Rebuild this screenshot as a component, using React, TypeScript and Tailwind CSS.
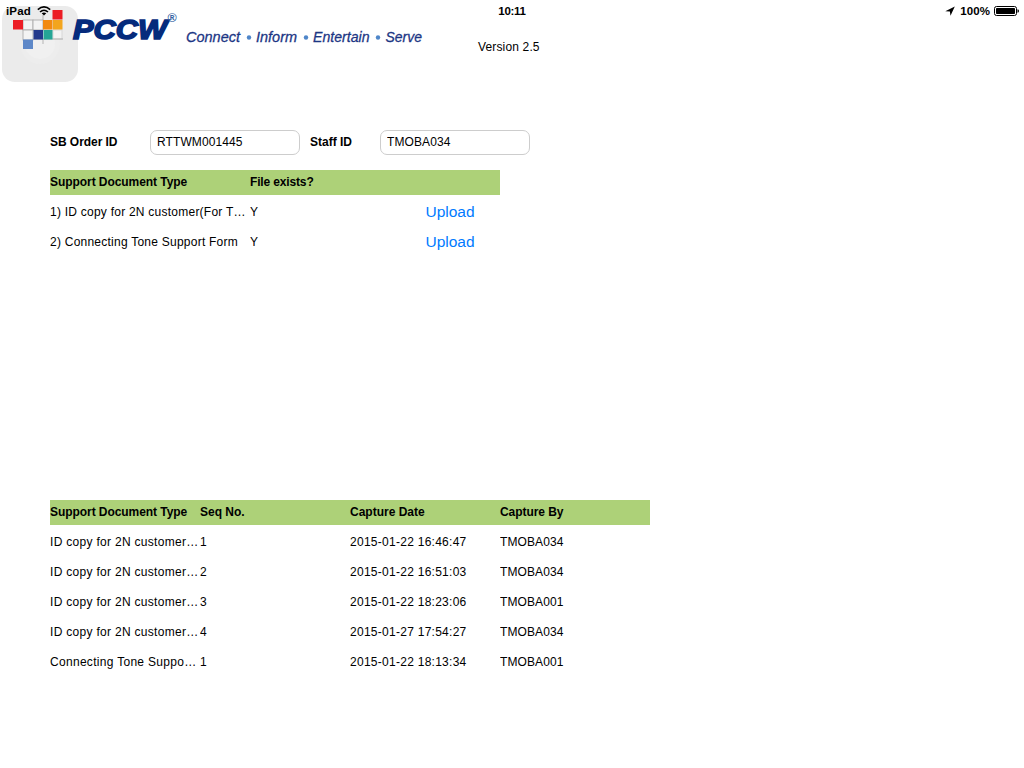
import React from "react";

const headCls = "text-[12px] leading-[25px] font-bold whitespace-pre";
const cellCls = "text-[12px] leading-[25px] overflow-hidden whitespace-pre";

const uploads = [
  { name: "1) ID copy for 2N customer(For T…", exists: "Y" },
  { name: "2) Connecting Tone Support Form", exists: "Y" },
];

const captures = [
  ["ID copy for 2N customer…", "1", "2015-01-22 16:46:47", "TMOBA034"],
  ["ID copy for 2N customer…", "2", "2015-01-22 16:51:03", "TMOBA034"],
  ["ID copy for 2N customer…", "3", "2015-01-22 18:23:06", "TMOBA001"],
  ["ID copy for 2N customer…", "4", "2015-01-27 17:54:27", "TMOBA034"],
  ["Connecting Tone Suppo…", "1", "2015-01-22 18:13:34", "TMOBA001"],
];

const font = "Liberation Sans, Arial, sans-serif";

function StatusBar() {
  return (
    <header className="absolute inset-x-0 top-0 grid h-[22px] grid-cols-3 items-center pl-[6px] pr-[5px] text-[11.5px] leading-[22px] font-bold">
      <div className="flex items-center gap-[6px]">
        <span className="tracking-[0.15px]">iPad</span>
        <svg width="14" height="10" viewBox="0 0 14 10" fill="none" stroke="#000" strokeWidth="1.6">
          <path d="M.8 3.600Q7-1.800 13.200 3.600" />
          <path d="M3 6Q7 2.500 11 6" />
          <path d="M7 9.600L4.700 7.300Q7 5.500 9.300 7.300Z" fill="#000" stroke="none" />
        </svg>
      </div>
      <div className="pr-[1px] text-center tracking-[-0.3px]">10:11</div>
      <div className="flex items-center justify-end">
        <svg className="mr-[5px]" width="10" height="10" viewBox="0 0 10 10">
          <path d="M9.800 .5L5.500 9.800L4.900 5.500L.3 5.300Z" />
        </svg>
        <span className="mr-[4px] tracking-[0.1px]">100%</span>
        <svg width="25" height="10" viewBox="0 0 25 10">
          <rect x=".5" y=".5" width="22" height="9" rx="2" fill="none" stroke="#000" />
          <rect x="2" y="2" width="19" height="6" rx=".8" />
          <path d="M23.500 3.200Q25 3.500 25 5T23.500 6.800Z" />
        </svg>
      </div>
    </header>
  );
}

function Logo() {
  return (
    <svg className="block" width="440" height="90" viewBox="0 0 440 90" fontFamily={font}>
      <rect x="2" y="6" width="76" height="76" rx="13" fill="#ebebeb" />
      <circle cx="40" cy="44" r="20" fill="#ededed" />
      <circle cx="40" cy="44" r="15" fill="#f0f0f0" />
      <g stroke="#adadad" strokeWidth=".9" fill="#f3f3f3">
        <rect x="23" y="20" width="10" height="10" />
        <rect x="33" y="20" width="10" height="10" />
        <rect x="23" y="30" width="10" height="10" />
        <rect x="53" y="30" width="9" height="9" stroke="#d6d6d6" />
        <path d="M43 39v5M43 15v5M33 39h30" />
      </g>
      <rect x="52.500" y="10" width="10" height="9.500" fill="#ec1c24" />
      <rect x="13" y="20" width="10" height="9.500" fill="#ec1c24" />
      <rect x="43" y="20" width="9.500" height="9.500" fill="#f28a10" />
      <rect x="53" y="20" width="9.500" height="9.500" fill="#f3a51d" />
      <rect x="33.500" y="30" width="9.500" height="9.500" fill="#243a8c" />
      <rect x="43.500" y="30" width="9" height="9.500" fill="#25a596" />
      <rect x="23" y="39.500" width="10" height="9.500" fill="#5e88c8" />
      <text x="73" y="39" fontSize="27" fontWeight="bold" fontStyle="italic" fill="#052b7c" stroke="#052b7c" strokeWidth="1.600" textLength="94" lengthAdjust="spacingAndGlyphs">PCCW</text>
      <text x="167.500" y="21.500" fontSize="12.500" fontWeight="bold" fill="#3564a4">®</text>
      <g fontSize="15.500" fontStyle="italic" fill="#1c3684" stroke="#1c3684" strokeWidth=".3">
        <text x="186" y="42" textLength="54" lengthAdjust="spacingAndGlyphs">Connect</text>
        <text x="256" y="42" textLength="41" lengthAdjust="spacingAndGlyphs">Inform</text>
        <text x="313" y="42" textLength="56.500" lengthAdjust="spacingAndGlyphs">Entertain</text>
        <text x="385.500" y="42" textLength="36.500" lengthAdjust="spacingAndGlyphs">Serve</text>
      </g>
      <g fill="#4f86c9">
        <circle cx="249" cy="37.500" r="2.200" />
        <circle cx="306" cy="37.500" r="2.200" />
        <circle cx="378" cy="37.500" r="2.200" />
      </g>
    </svg>
  );
}

function Field({ value }: { value: string }) {
  return (
    <input
      readOnly
      defaultValue={value}
      className="h-[25px] w-[150px] rounded-[7px] border border-[#cdcdcd] bg-white px-[6px] pb-[1px] text-[12px] tracking-[0.1px] outline-none"
    />
  );
}

export default function App() {
  return (
    <div className="relative flex h-[768px] w-[1024px] flex-col overflow-hidden bg-white font-['Liberation_Sans',Arial,sans-serif] text-black">
      <div className="flex h-[130px] items-start">
        <Logo />
        <div className="ml-[38px] mt-[38px] text-[12px] leading-[18px] tracking-[0.15px]">Version 2.5</div>
      </div>
      <StatusBar />
      <div className="ml-[50px] flex h-[25px] items-center">
        <label className="w-[100px] pb-[2px] text-[12px] font-bold tracking-[-0.05px]">SB Order ID</label>
        <Field value="RTTWM001445" />
        <label className="ml-[10px] w-[70px] pb-[2px] text-[12px] font-bold">Staff ID</label>
        <Field value="TMOBA034" />
      </div>

      <section className="ml-[50px] mt-[15px] h-[330px] w-[450px]">
        <div className="grid h-[25px] grid-cols-[200px_250px] bg-[#add178]">
          <div className={headCls + " tracking-[-0.06px]"}>Support Document Type</div>
          <div className={headCls + " tracking-[-0.15px]"}>File exists?</div>
        </div>
        {uploads.map((row) => (
          <div key={row.name} className="mt-[5px] grid h-[25px] grid-cols-[200px_150px_100px]">
            <div className={cellCls + " tracking-[0.24px]"}>{row.name}</div>
            <div className={cellCls}>{row.exists}</div>
            <button className="h-[25px] text-center text-[15.5px] leading-[23px] pb-[2px] text-[#007aff]">Upload</button>
          </div>
        ))}
      </section>

      <section className="ml-[50px] w-[600px]">
        <div className="grid h-[25px] grid-cols-4 bg-[#add178]">
          <div className={headCls + " tracking-[-0.06px]"}>Support Document Type</div>
          <div className={headCls}>Seq No.</div>
          <div className={headCls}>Capture Date</div>
          <div className={headCls + " tracking-[-0.06px]"}>Capture By</div>
        </div>
        {captures.map(([name, seq, date, by]) => (
          <div key={date} className="mt-[5px] grid h-[25px] grid-cols-4">
            <div className={cellCls + " tracking-[0.3px]"}>{name}</div>
            <div className={cellCls}>{seq}</div>
            <div className={cellCls + " tracking-[0.27px]"}>{date}</div>
            <div className={cellCls + " tracking-[0.1px]"}>{by}</div>
          </div>
        ))}
      </section>
    </div>
  );
}
